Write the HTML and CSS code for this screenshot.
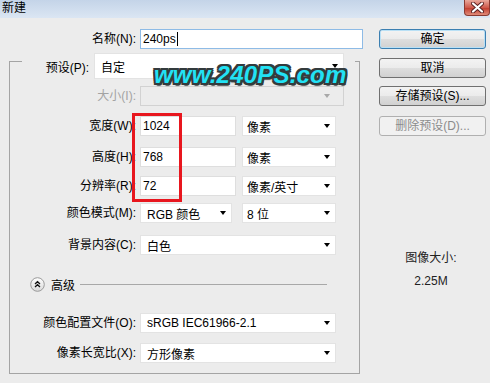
FILE: index.html
```html
<!DOCTYPE html>
<html>
	<head>
		<meta charset="utf-8">
		<title>新建</title>
		<link rel="stylesheet" href="styles.css">
	</head>
	<body>
		<div class="titlebar">
			<span class="title">新建</span>
			<span class="close">
				<svg width="13" height="11" viewBox="0 0 13 11">
					<path d="M2 1.5 L11 9.5 M11 1.5 L2 9.5" stroke="#5a2020" stroke-width="4" stroke-linecap="round"/>
					<path d="M2 1.5 L11 9.5 M11 1.5 L2 9.5" stroke="#fff" stroke-width="2.2" stroke-linecap="round"/>
				</svg>
			</span>
		</div>

		<div class="main">
			<div class="left">
				<div class="row name-row">
					<span class="lbl">名称(N):</span>
					<span class="input name-field">240ps<span class="caret"></span></span>
				</div>

				<div class="group">
					<div class="preset-row">
						<span class="preset-lbl">预设(P):</span>
						<span class="select preset-select">自定</span>
					</div>

					<div class="row sp-7">
						<span class="lbl disabled">大小(I):</span>
						<span class="select select-off size-select"></span>
					</div>

					<div class="row">
						<span class="lbl">宽度(W):</span>
						<span class="input num-field">1024</span>
						<span class="select unit-select">像素</span>
					</div>

					<div class="row sp-11">
						<span class="lbl">高度(H):</span>
						<span class="input num-field">768</span>
						<span class="select unit-select">像素</span>
					</div>

					<div class="row sp-9">
						<span class="lbl">分辨率(R):</span>
						<span class="input num-field">72</span>
						<span class="select unit-select">像素/英寸</span>
					</div>

					<div class="row sp-7">
						<span class="lbl">颜色模式(M):</span>
						<span class="select mode-select">RGB 颜色</span>
						<span class="select bits-select">8 位</span>
					</div>

					<div class="row sp-12">
						<span class="lbl">背景内容(C):</span>
						<span class="select wide-select">白色</span>
					</div>

					<div class="adv-row">
						<svg class="adv-icon" width="15" height="15" viewBox="0 0 15 15">
							<defs>
								<linearGradient id="advfill" x1="0" y1="0" x2="0" y2="1">
									<stop offset="0" stop-color="#ffffff"/>
									<stop offset="1" stop-color="#d9d9d9"/>
								</linearGradient>
							</defs>
							<circle cx="7.5" cy="7.5" r="6.8" fill="url(#advfill)" stroke="#9a9a9a"/>
							<path d="M5 7 L7.5 4.7 L10 7 M5 10 L7.5 7.7 L10 10" fill="none" stroke="#111" stroke-width="1.3"/>
						</svg>
						<span class="adv-text">高级</span>
						<span class="adv-line"></span>
					</div>

					<div class="row sp-21">
						<span class="lbl">颜色配置文件(O):</span>
						<span class="select wide-select">sRGB IEC61966-2.1</span>
					</div>

					<div class="row">
						<span class="lbl">像素长宽比(X):</span>
						<span class="select wide-select">方形像素</span>
					</div>
				</div>
			</div>

			<div class="right">
				<div class="btn btn-default">确定</div>
				<div class="btn">取消</div>
				<div class="btn">存储预设(S)...</div>
				<div class="btn btn-off">删除预设(D)...</div>

				<div class="info">
					<div>图像大小:</div>
					<div class="info-size">2.25M</div>
				</div>
			</div>
		</div>

		<div class="watermark">www.240PS.com</div>
		<div class="redbox"></div>
	</body>
</html>
```

FILE: styles.css
```css
* {
	box-sizing: border-box;
}

body {
	margin: 0;
	width: 490px;
	height: 383px;
	overflow: hidden;
	position: relative;
	background: #ececec;
	color: #000;
	font-family: "Liberation Sans", "Noto Sans CJK SC", sans-serif;
	font-size: 12px;
}

/* title bar */
.titlebar {
	height: 18px;
	display: flex;
	justify-content: space-between;
	align-items: flex-start;
	padding-left: 2px;
	background: linear-gradient(#c4d4e8, #dbe6f3);
}

.title {
	line-height: 17px;
}

.close {
	width: 26px;
	height: 16px;
	display: flex;
	align-items: center;
	justify-content: center;
	border: 1px solid #8a3a32;
	border-top: none;
	border-radius: 0 0 4px 4px;
	background: linear-gradient(#e9a99c, #cf5a4c 50%, #c0392b 51%, #e08a78);
}

/* layout */
.main {
	display: flex;
	padding: 11px 0 0 9px;
}

.left {
	width: 354px;
}

.right {
	width: 107px;
	margin-left: 16px;
	display: flex;
	flex-direction: column;
}

.row {
	display: flex;
	align-items: center;
	height: 20px;
	margin-top: 10px;
}

.name-row {
	margin-top: 0;
}

.sp-7 { margin-top: 7px; }
.sp-9 { margin-top: 9px; }
.sp-11 { margin-top: 11px; }
.sp-12 { margin-top: 12px; }
.sp-21 { margin-top: 21px; }

.lbl {
	width: 130px;
	padding-right: 4px;
	text-align: right;
	white-space: nowrap;
	line-height: 20px;
}

.name-row .lbl {
	width: 131px;
}

.lbl.disabled {
	color: #a3a3a3;
}

/* controls */
.input {
	height: 20px;
	display: flex;
	align-items: center;
	padding-left: 2px;
	background: #fff;
	border: 1px solid #dedede;
	white-space: nowrap;
}

.name-field {
	width: 223px;
	border-color: #8ebbe6;
}

.caret {
	width: 1px;
	height: 14px;
	margin-left: 1px;
	background: #000;
}

.num-field {
	width: 96px;
}

.select {
	height: 20px;
	display: flex;
	align-items: center;
	padding: 0 5px 0 6px;
	background: #fff;
	border: 1px solid #e3e3e3;
	white-space: nowrap;
}

.select::after {
	content: "";
	margin-left: auto;
	border-top: 4px solid #000;
	border-left: 3px solid transparent;
	border-right: 3px solid transparent;
}

.select-off {
	background: #ececec;
	border-color: #d2d2d2;
}

.select-off::after {
	border-top-color: #a8a8a8;
}

.size-select {
	width: 204px;
	padding-right: 13px;
}

.unit-select {
	width: 94px;
	margin-left: 6px;
	padding-left: 4px;
}

.mode-select {
	width: 92px;
}

.bits-select {
	width: 94px;
	margin-left: 10px;
	padding-left: 4px;
}

.wide-select {
	width: 196px;
}

/* group box */
.group {
	width: 351px;
	margin-top: 12px;
	padding-bottom: 10px;
	border: 1px solid #a4a4a4;
}

.preset-row {
	height: 26px;
	margin: -9px 4px 0 12px;
	display: flex;
	align-items: center;
	background: #ececec;
}

.preset-lbl {
	width: 70px;
	padding-right: 3px;
	text-align: right;
}

.preset-select {
	width: 250px;
	height: 26px;
	margin-left: 2px;
	padding-right: 5px;
}

.adv-row {
	height: 16px;
	margin: 21px 32px 0 20px;
	display: flex;
	align-items: center;
}

.adv-text {
	margin-left: 6px;
}

.adv-line {
	flex: 1;
	height: 1px;
	margin-left: 5px;
	background: #a8a8a8;
}

/* buttons */
.btn {
	height: 20px;
	margin-top: 9px;
	line-height: 18px;
	text-align: center;
	border: 1px solid #707070;
	border-radius: 3px;
	background: linear-gradient(#f3f3f3, #ebebeb 50%, #dedede 51%, #d1d1d1);
}

.btn:first-child {
	margin-top: 0;
}

.btn:nth-child(3) {
	margin-top: 8px;
}

.btn:nth-child(4) {
	margin-top: 10px;
}

.btn-default {
	border-color: #3c7fb1;
	box-shadow: inset 0 0 0 1px #b9e0f5;
}

.btn-off {
	color: #8c8c8c;
	border-color: #b0b0b0;
	background: #f1f1f1;
}

.info {
	margin-top: 114px;
	padding-right: 3px;
	text-align: center;
	line-height: 16px;
	color: #222;
}

.info-size {
	margin-top: 7px;
}

/* overlays */
.watermark {
	position: absolute;
	left: 154px;
	top: 61px;
	font-family: "Liberation Sans", sans-serif;
	font-size: 24px;
	font-weight: bold;
	font-style: italic;
	letter-spacing: 0.2px;
	color: #22e2f4;
	text-shadow:
		2px 0 0 #333b3d, -2px 0 0 #333b3d, 0 2px 0 #333b3d, 0 -2px 0 #333b3d,
		2px 2px 0 #333b3d, -2px 2px 0 #333b3d, 2px -2px 0 #333b3d, -2px -2px 0 #333b3d,
		1px 3px 1px #555;
}

.redbox {
	position: absolute;
	left: 132px;
	top: 113px;
	width: 50px;
	height: 89px;
	border: 3px solid #e8161e;
}
```
